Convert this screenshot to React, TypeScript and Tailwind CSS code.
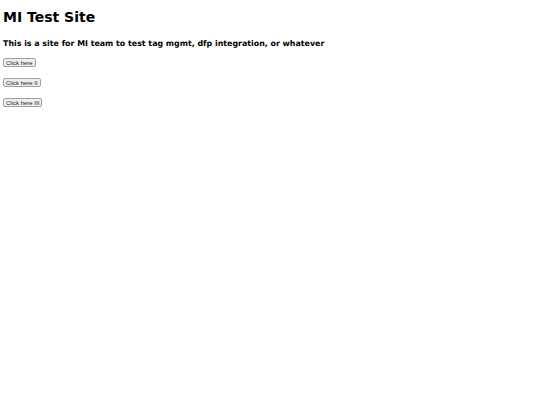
import React from 'react';

const buttons = ['Click here', 'Click here II', 'Click here III'];

const App: React.FC = () => {
  return (
    <div className="min-h-screen bg-white text-black px-[3px] py-[4px] font-['DejaVu_Sans',sans-serif]">
      <h1 className="text-[14px] font-bold leading-[1.15] mt-[5px] mb-[14px]">MI Test Site</h1>
      <h3 className="text-[7.9px] font-bold leading-[1.15] mb-[10px]">
        This is a site for MI team to test tag mgmt, dfp integration, or whatever
      </h3>
      {buttons.map(label => (
        <p key={label} className="mb-[11px]">
          <button className="flex items-center font-['Liberation_Sans',sans-serif] text-[6px] leading-none px-[2px] h-[9px] bg-[#efefef] border border-[#a0a0a0] rounded-[2px] text-[#222]">
            {label}
          </button>
        </p>
      ))}
    </div>
  );
};

export default App;
